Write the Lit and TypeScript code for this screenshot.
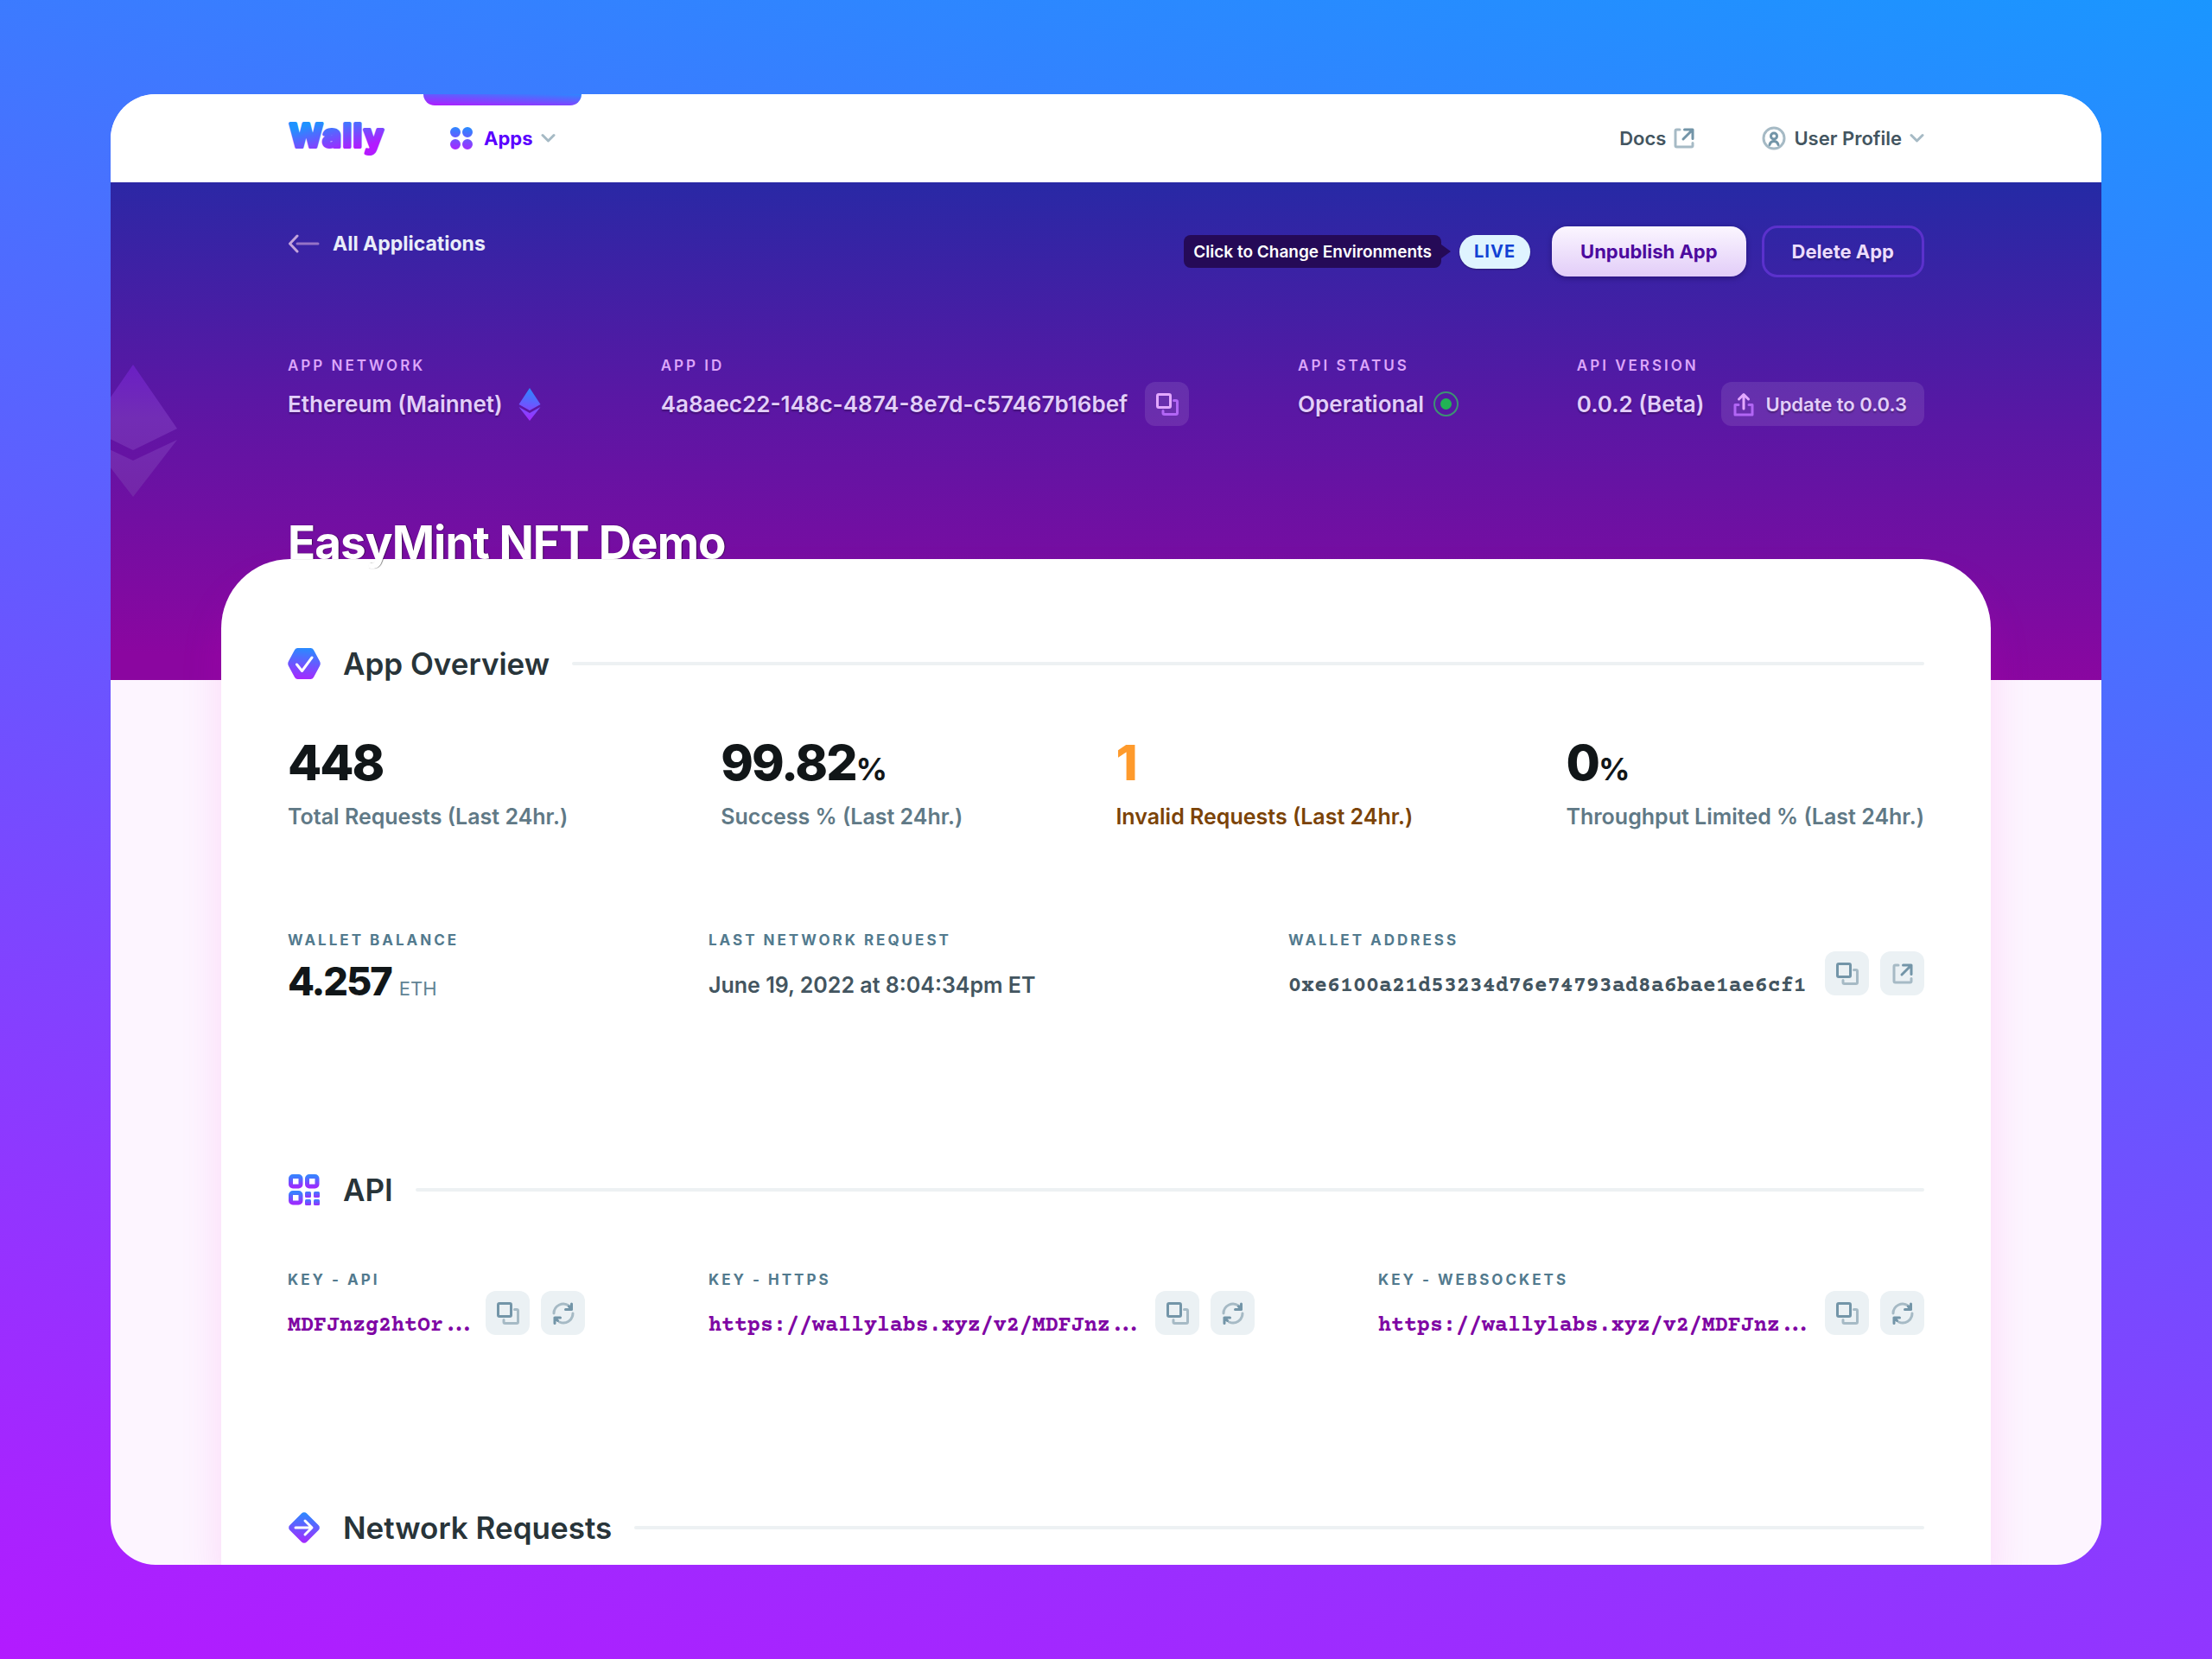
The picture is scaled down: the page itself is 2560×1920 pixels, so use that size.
import { LitElement, html, css, svg, nothing, type TemplateResult, type SVGTemplateResult } from "lit";
import { customElement } from "lit/decorators.js";

interface Stat {
  value: string;
  unit?: string;
  label: string;
  warn?: boolean;
}

interface ApiKey {
  name: string;
  text: string;
}

const STATS: Stat[] = [
  { value: "448", label: "Total Requests (Last 24hr.)" },
  { value: "99.82", unit: "%", label: "Success % (Last 24hr.)" },
  { value: "1", label: "Invalid Requests (Last 24hr.)", warn: true },
  { value: "0", unit: "%", label: "Throughput Limited % (Last 24hr.)" },
];

const KEYS: ApiKey[] = [
  { name: "Key - API", text: "MDFJnzg2htOr" },
  { name: "Key - HTTPS", text: "https://wallylabs.xyz/v2/MDFJnz" },
  { name: "Key - Websockets", text: "https://wallylabs.xyz/v2/MDFJnz" },
];

const icon = (w: number, h: number, body: SVGTemplateResult, cls = ""): TemplateResult =>
  html`<svg class="icon ${cls}" width=${w} height=${h} viewBox="0 0 ${w} ${h}" aria-hidden="true">${body}</svg>`;

const copyIcon = () =>
  icon(26, 26, svg`
    <path class="soft" d="M20.500 8.500H23A1.500 1.500 0 0 1 24.500 10v13a1.500 1.500 0 0 1-1.500 1.500H9.500A1.500 1.500 0 0 1 8 23V20.500"/>
    <rect class="strong" x="1.500" y="1.500" width="15" height="15" rx="1.500"/>`);

const externalIcon = () =>
  icon(24, 24, svg`
    <path class="soft" d="M7 2H3.500A1.500 1.500 0 0 0 2 3.500v17A1.500 1.500 0 0 0 3.500 22h17a1.500 1.500 0 0 0 1.500-1.500V17.500"/>
    <path class="strong" d="M12.500 2H22v10.500M21.500 2.500L11 13"/>`);

const refreshIcon = () =>
  icon(26, 26, svg`
    <path class="soft" d="M2 13A11 11 0 0 1 19.500 4.200M24 13A11 11 0 0 1 8.500 23"/>
    <path class="strong" d="M22.500 2v6.500H15.500M3 24.500v-6.500H9.500M22.500 8.500L19.500 5M3 18L6.500 21.500"/>`);

const chevronIcon = () =>
  icon(17, 12, svg`<path class="soft" d="M2 2.500l6.500 6.500 6.500-6.500"/>`);

const userIcon = () =>
  icon(28, 28, svg`
    <circle class="soft" cx="14" cy="14" r="12"/>
    <circle class="strong" cx="14" cy="11.500" r="3.500"/>
    <path class="strong" d="M9 21.500c.800-2.800 2.600-4 5-4s4.200 1.200 5 4"/>`);

const backIcon = () =>
  icon(38, 22, svg`
    <path class="soft" d="M11 11H35"/>
    <path class="strong" d="M11 2L2.500 11L11 20"/>`);

const uploadIcon = () =>
  icon(26, 28, svg`
    <path class="soft" d="M7 14.500H3V26h20V14.500h-4"/>
    <path class="strong" d="M13 19V3M7.500 8L13 2.500L18.500 8"/>`);

const appsIcon = () =>
  icon(28, 28, svg`<path fill="url(#brand)" d="M1 7a6 6 0 1 1 12 0a6 6 0 1 1-12 0M15 7a6 6 0 1 1 12 0a6 6 0 1 1-12 0M1 21a6 6 0 1 1 12 0a6 6 0 1 1-12 0M15 21a6 6 0 1 1 12 0a6 6 0 1 1-12 0"/>`, "apps");

const etherIcon = () =>
  icon(26, 40, svg`<path fill="url(#brand)" d="M13 1L25.500 20L13 27L.500 20ZM.500 23L13 30L25.500 23L13 39Z"/>`);

const overviewIcon = () =>
  icon(38, 38, svg`
    <path fill="url(#brand)" d="M11.500 1h15a4 4 0 0 1 3.400 2l7 13a6 6 0 0 1 0 6l-7 13a4 4 0 0 1-3.400 2h-15a4 4 0 0 1-3.400-2l-7-13a6 6 0 0 1 0-6l7-13a4 4 0 0 1 3.400-2Z"/>
    <path fill="none" stroke="#fff" stroke-width="3" stroke-linecap="round" stroke-linejoin="round" d="M10.500 20l6 7.500L28 12"/>`);

const tile = (x: number, y: number) => svg`
  <rect x=${x + 2.5} y=${y + 2.5} width="11.500" height="11.500" rx="2.500" fill="none" stroke="url(#brand-down)" stroke-width="5"/>`;
const dot = (x: number, y: number) => svg`
  <rect x=${x} y=${y} width="7" height="7" rx="1.500" fill="url(#brand-down)"/>`;
const apiIcon = () =>
  icon(38, 38, svg`${tile(1, 1)}${tile(20, 1)}${tile(1, 20)}${dot(20, 21)}${dot(30, 21)}${dot(20, 30)}${dot(30, 30)}`);

const networkIcon = () =>
  icon(38, 38, svg`
    <path fill="url(#brand)" d="M16 2.500a4 4 0 0 1 6 0L35.500 16a4 4 0 0 1 0 6L22 35.500a4 4 0 0 1-6 0L2.500 22a4 4 0 0 1 0-6Z"/>
    <path fill="none" stroke="#fff" stroke-width="3" stroke-linecap="round" stroke-linejoin="round" d="M9 19h18M20 11l8 8-8 8"/>`);

@customElement("app-root")
export class AppRoot extends LitElement {
  static styles = css`
    :host {
      display: flex;
      box-sizing: border-box;
      height: 100vh;
      padding: 109px 128px;
      background: linear-gradient(12deg, #b31aff, #1a96ff);
      font-family: Inter, "Liberation Sans", sans-serif;
      font-size: 22px;
      color: #435560;
    }
    *, *::before, *::after { box-sizing: border-box; }
    h1, h2, p, dl, dd, dt { margin: 0; font-weight: inherit; }
    button, a { font: inherit; color: inherit; text-decoration: none; }
    button { border: 0; padding: 0; background: none; cursor: pointer; }
    .defs { position: absolute; }
    .icon { display: block; flex: none; }
    .soft, .strong { fill: none; stroke-width: 3; stroke-linecap: round; stroke-linejoin: round; }
    .soft { stroke: #a6bac5; }
    .strong { stroke: #7395a8; }

    .window {
      position: relative;
      flex: 1;
      min-width: 0;
      display: flex;
      flex-direction: column;
      overflow: hidden;
      border-radius: 52px;
      background: #fdf5ff;
    }

    .topbar {
      flex: none;
      display: flex;
      align-items: center;
      height: 102px;
      padding: 0 205px;
      background: #fff;
      font-weight: 600;
    }
    .logo { display: block; overflow: visible; }
    .logo-text {
      font-family: Inter, sans-serif;
      font-size: 37px;
      font-weight: 700;
      letter-spacing: 2px;
      fill: url(#brand-text);
      stroke: url(#brand-text);
      stroke-width: 4;
      stroke-linejoin: round;
    }
    .tab {
      position: relative;
      align-self: stretch;
      display: flex;
      align-items: center;
      gap: 10px;
      margin-left: 44px;
      padding: 0 30px;
      color: #5a00ff;
      font-weight: 700;
    }
    .apps { margin-right: 2px; }
    .tab::before {
      content: "";
      position: absolute;
      inset: 0 0 auto;
      height: 13px;
      border-radius: 0 0 13px 13px;
      background: linear-gradient(3deg, #b31aff, #2e86ff);
    }
    .top-link { display: flex; align-items: center; gap: 9px; }
    .docs { margin-left: auto; }
    .profile { margin-left: 78px; }

    .hero {
      flex: none;
      background: linear-gradient(181deg, #242aa5, #5a17a4 46%, #8b06a0 95%);
    }
    .hero-inner {
      position: relative;
      z-index: 2;
      padding: 50px 205px 127px;
      color: #e3cff9;
    }
    .backdrop { position: absolute; left: -26px; top: 210px; }
    .hero-bar { display: flex; align-items: flex-start; }
    .back {
      display: flex;
      align-items: center;
      gap: 14px;
      height: 42px;
      font-size: 23px;
      font-weight: 700;
      color: #e9edf9;
    }
    .back .strong { stroke: #c3a4dc; }
    .back .soft { stroke: #9573c6; }
    .actions { display: flex; align-items: center; margin-left: auto; height: 60px; }
    .tooltip {
      position: relative;
      display: flex;
      align-items: center;
      height: 38px;
      margin-right: 21px;
      padding: 0 11px;
      border-radius: 8px;
      background: #250a57;
      color: #fff;
      font-size: 19px;
      font-weight: 600;
    }
    .tooltip::after {
      content: "";
      position: absolute;
      left: 100%;
      top: 11px;
      border: solid transparent;
      border-width: 8px 0 8px 11px;
      border-left-color: #250a57;
    }
    .env {
      height: 39px;
      margin-right: 25px;
      padding: 0 17px;
      border-radius: 20px;
      background: #dff4ff;
      box-shadow: 0 1px 2px rgba(0, 0, 0, 0.3);
      color: #1142d4;
      font-size: 20px;
      font-weight: 700;
      letter-spacing: 1px;
    }
    .primary, .outline { height: 58px; border-radius: 18px; font-weight: 700; }
    .primary {
      margin-right: 18px;
      padding: 0 33px;
      background: linear-gradient(#fbf6ff, #e2cdf8);
      box-shadow: 0 2px 6px rgba(20, 0, 60, 0.4);
      color: #4d0a9e;
    }
    .outline {
      height: 60px;
      padding: 0 32px;
      border: 3px solid #5b31cc;
      color: #ecdcfd;
      text-shadow: 0 2px 2px rgba(0, 0, 0, 0.25);
    }

    .meta {
      display: grid;
      grid-template-columns: 432fr 738fr 323fr 401fr;
      margin-top: 92px;
    }
    .label {
      font-size: 17px;
      line-height: 20px;
      font-weight: 700;
      letter-spacing: 3px;
      text-transform: uppercase;
      white-space: nowrap;
      color: #527a8e;
    }
    .meta .label { font-weight: 600; color: #dda6fa; }
    .meta-value {
      display: flex;
      align-items: center;
      height: 51px;
      margin-top: 9px;
      gap: 20px;
      font-size: 26px;
      font-weight: 600;
      white-space: nowrap;
      text-shadow: 0 2px 2px rgba(0, 0, 0, 0.3);
    }
    .network { gap: 18px; }
    .status { gap: 11px; }
    .ring {
      display: grid;
      place-items: center;
      width: 29px;
      height: 29px;
      border: 2px solid #3d9273;
      border-radius: 50%;
    }
    .ring::after {
      content: "";
      width: 13px;
      height: 13px;
      border-radius: 50%;
      background: #22b455;
    }
    .version { justify-content: space-between; }
    .square {
      flex: none;
      display: grid;
      place-items: center;
      width: 51px;
      height: 51px;
      border-radius: 12px;
      background: #ebf1f4;
    }
    .meta .square, .update { background: rgba(255, 255, 255, 0.1); }
    .meta .strong { stroke: #e3a9ff; }
    .meta .soft { stroke: #b266f5; }
    .update {
      display: flex;
      align-items: center;
      gap: 12px;
      height: 51px;
      padding: 0 20px 0 13px;
      border-radius: 12px;
      font-size: 22px;
      text-shadow: inherit;
    }
    .title {
      margin-top: 103px;
      font-size: 53px;
      line-height: 64px;
      font-weight: 700;
      letter-spacing: -1px;
      color: #fff;
      text-shadow: 1px 0 1px rgba(0, 0, 0, 0.5);
    }

    .card {
      position: relative;
      z-index: 1;
      flex: 1 0 auto;
      margin: -140px 128px 0;
      padding: 99px 77px 0;
      border-radius: 80px 80px 0 0;
      background: #fff;
      box-shadow: 0 30px 50px rgba(240, 0, 200, 0.12);
    }
    .section { padding-bottom: 197px; }
    .heading {
      display: flex;
      align-items: center;
      font-size: 35px;
      line-height: 44px;
      font-weight: 600;
      color: #283439;
    }
    .heading .icon { margin-right: 26px; }
    .heading::after {
      content: "";
      flex: 1;
      height: 4px;
      margin-left: 26px;
      border-radius: 2px;
      background: #edf1f3;
    }
    .stats { display: flex; justify-content: space-between; margin-top: 63px; }
    .stat { display: flex; flex-direction: column-reverse; }
    .stat-value {
      font-size: 57px;
      line-height: 60px;
      font-weight: 800;
      letter-spacing: -2px;
      color: #111618;
    }
    .unit { font-size: 36px; line-height: 36px; font-weight: 700; }
    .stat-label {
      margin-top: 16px;
      font-size: 25px;
      line-height: 32px;
      font-weight: 600;
      color: #607986;
    }
    .warn .stat-value { color: #fe9a2c; }
    .warn .stat-label { color: #7b4307; }

    .wallet {
      display: grid;
      grid-template-columns: 487fr 671fr 736fr;
      margin-top: 117px;
    }
    .keys {
      display: grid;
      grid-template-columns: 344fr 632fr 632fr;
      gap: 143px;
      margin-top: 72px;
    }
    .field { display: flex; justify-content: space-between; height: 78px; }
    .value {
      margin-top: 26px;
      font-size: 25px;
      line-height: 32px;
      font-weight: 600;
      white-space: nowrap;
    }
    .mono {
      margin-top: 28px;
      font-family: "Courier Prime", "Courier New", "Liberation Mono", monospace;
      font-weight: 700;
    }
    .secret { color: #7f06a4; }
    .dots {
      margin-left: 4px;
      font-family: Inter, sans-serif;
      font-size: 28px;
      line-height: 16px;
    }
    .balance { display: flex; align-items: baseline; gap: 9px; margin-top: 16px; }
    .amount {
      font-size: 45px;
      line-height: 44px;
      font-weight: 800;
      letter-spacing: -2px;
      color: #111618;
    }
    .currency { line-height: 24px; color: #5f8394; }
    .tools { display: flex; align-items: flex-end; gap: 13px; padding-bottom: 4px; }
  `;

  private copyButton(what: string) {
    return html`<button class="square" type="button" aria-label="Copy ${what}">${copyIcon()}</button>`;
  }

  private renderTopbar() {
    return html`
      <header class="topbar">
        <a href="#" aria-label="Wally">
          <svg class="logo" width="113" height="44" viewBox="0 0 113 44">
            <text class="logo-text" x="2" y="32">Wally</text>
          </svg>
        </a>
        <button class="tab" type="button">${appsIcon()}<span>Apps</span>${chevronIcon()}</button>
        <a class="top-link docs" href="#">Docs${externalIcon()}</a>
        <button class="top-link profile" type="button">${userIcon()}<span>User Profile</span>${chevronIcon()}</button>
      </header>`;
  }

  private renderHero() {
    return html`
      <div class="hero">
        <svg class="icon backdrop" width="104" height="365" viewBox="0 0 104 365" aria-hidden="true">
          <path fill="url(#ghost)" d="M52 103L103 177L52 202L1 177ZM1 190L52 214L103 190L52 256Z"/>
        </svg>
        <div class="hero-inner">
          <div class="hero-bar">
            <a class="back" href="#">${backIcon()}All Applications</a>
            <div class="actions">
              <span class="tooltip" role="tooltip" id="env-tip">Click to Change Environments</span>
              <button class="env" type="button" aria-describedby="env-tip">LIVE</button>
              <button class="primary" type="button">Unpublish App</button>
              <button class="outline" type="button">Delete App</button>
            </div>
          </div>
          <dl class="meta">
            <div>
              <dt class="label">App Network</dt>
              <dd class="meta-value network">Ethereum (Mainnet)${etherIcon()}</dd>
            </div>
            <div>
              <dt class="label">App ID</dt>
              <dd class="meta-value">4a8aec22-148c-4874-8e7d-c57467b16bef${this.copyButton("app ID")}</dd>
            </div>
            <div>
              <dt class="label">API Status</dt>
              <dd class="meta-value status">Operational<span class="ring"></span></dd>
            </div>
            <div>
              <dt class="label">API Version</dt>
              <dd class="meta-value version">
                0.0.2 (Beta)
                <button class="update" type="button">${uploadIcon()}Update to 0.0.3</button>
              </dd>
            </div>
          </dl>
          <h1 class="title">EasyMint NFT Demo</h1>
        </div>
      </div>`;
  }

  private renderStat(s: Stat) {
    return html`
      <div class="stat ${s.warn ? "warn" : ""}">
        <dt class="stat-label">${s.label}</dt>
        <dd class="stat-value">${s.value}${s.unit ? html`<span class="unit">${s.unit}</span>` : nothing}</dd>
      </div>`;
  }

  private renderKey(k: ApiKey) {
    return html`
      <div class="field">
        <div>
          <p class="label">${k.name}</p>
          <p class="value mono secret">${k.text}<span class="dots">…</span></p>
        </div>
        <div class="tools">
          ${this.copyButton(k.name)}
          <button class="square" type="button" aria-label="Regenerate ${k.name}">${refreshIcon()}</button>
        </div>
      </div>`;
  }

  render() {
    return html`
      <svg class="defs" width="0" height="0" aria-hidden="true">
        <defs>
          <linearGradient id="brand" x1="0.400" y1="0" x2="0.300" y2="1">
            <stop offset="0" stop-color="#2a8aff"/><stop offset="1" stop-color="#a827ff"/>
          </linearGradient>
          <linearGradient id="brand-down" x1="0" y1="0" x2="0" y2="1">
            <stop offset="0" stop-color="#3a80ff"/><stop offset="1" stop-color="#9a2cff"/>
          </linearGradient>
          <linearGradient id="brand-text" gradientUnits="userSpaceOnUse" x1="47" y1="0" x2="58" y2="40">
            <stop offset="0" stop-color="#1f92ff"/><stop offset="1" stop-color="#b31aff"/>
          </linearGradient>
          <linearGradient id="ghost" x1="0" y1="0" x2="0" y2="1">
            <stop offset="0" stop-color="#6a1fc4"/><stop offset="0.400" stop-color="#722db5"/>
            <stop offset="1" stop-color="#7426a8"/>
          </linearGradient>
        </defs>
      </svg>
      <div class="window">
        ${this.renderTopbar()}
        ${this.renderHero()}
        <main class="card">
          <section class="section">
            <h2 class="heading">${overviewIcon()}App Overview</h2>
            <dl class="stats">${STATS.map((s) => this.renderStat(s))}</dl>
            <div class="wallet">
              <div>
                <p class="label">Wallet Balance</p>
                <p class="balance"><span class="amount">4.257</span><span class="currency">ETH</span></p>
              </div>
              <div>
                <p class="label">Last Network Request</p>
                <p class="value">June 19, 2022 at 8:04:34pm ET</p>
              </div>
              <div class="field">
                <div>
                  <p class="label">Wallet Address</p>
                  <p class="value mono">0xe6100a21d53234d76e74793ad8a6bae1ae6cf1</p>
                </div>
                <div class="tools">
                  ${this.copyButton("wallet address")}
                  <a class="square" href="#" aria-label="Open wallet address">${externalIcon()}</a>
                </div>
              </div>
            </div>
          </section>
          <section class="section">
            <h2 class="heading">${apiIcon()}API</h2>
            <div class="keys">${KEYS.map((k) => this.renderKey(k))}</div>
          </section>
          <h2 class="heading">${networkIcon()}Network Requests</h2>
        </main>
      </div>`;
  }
}
